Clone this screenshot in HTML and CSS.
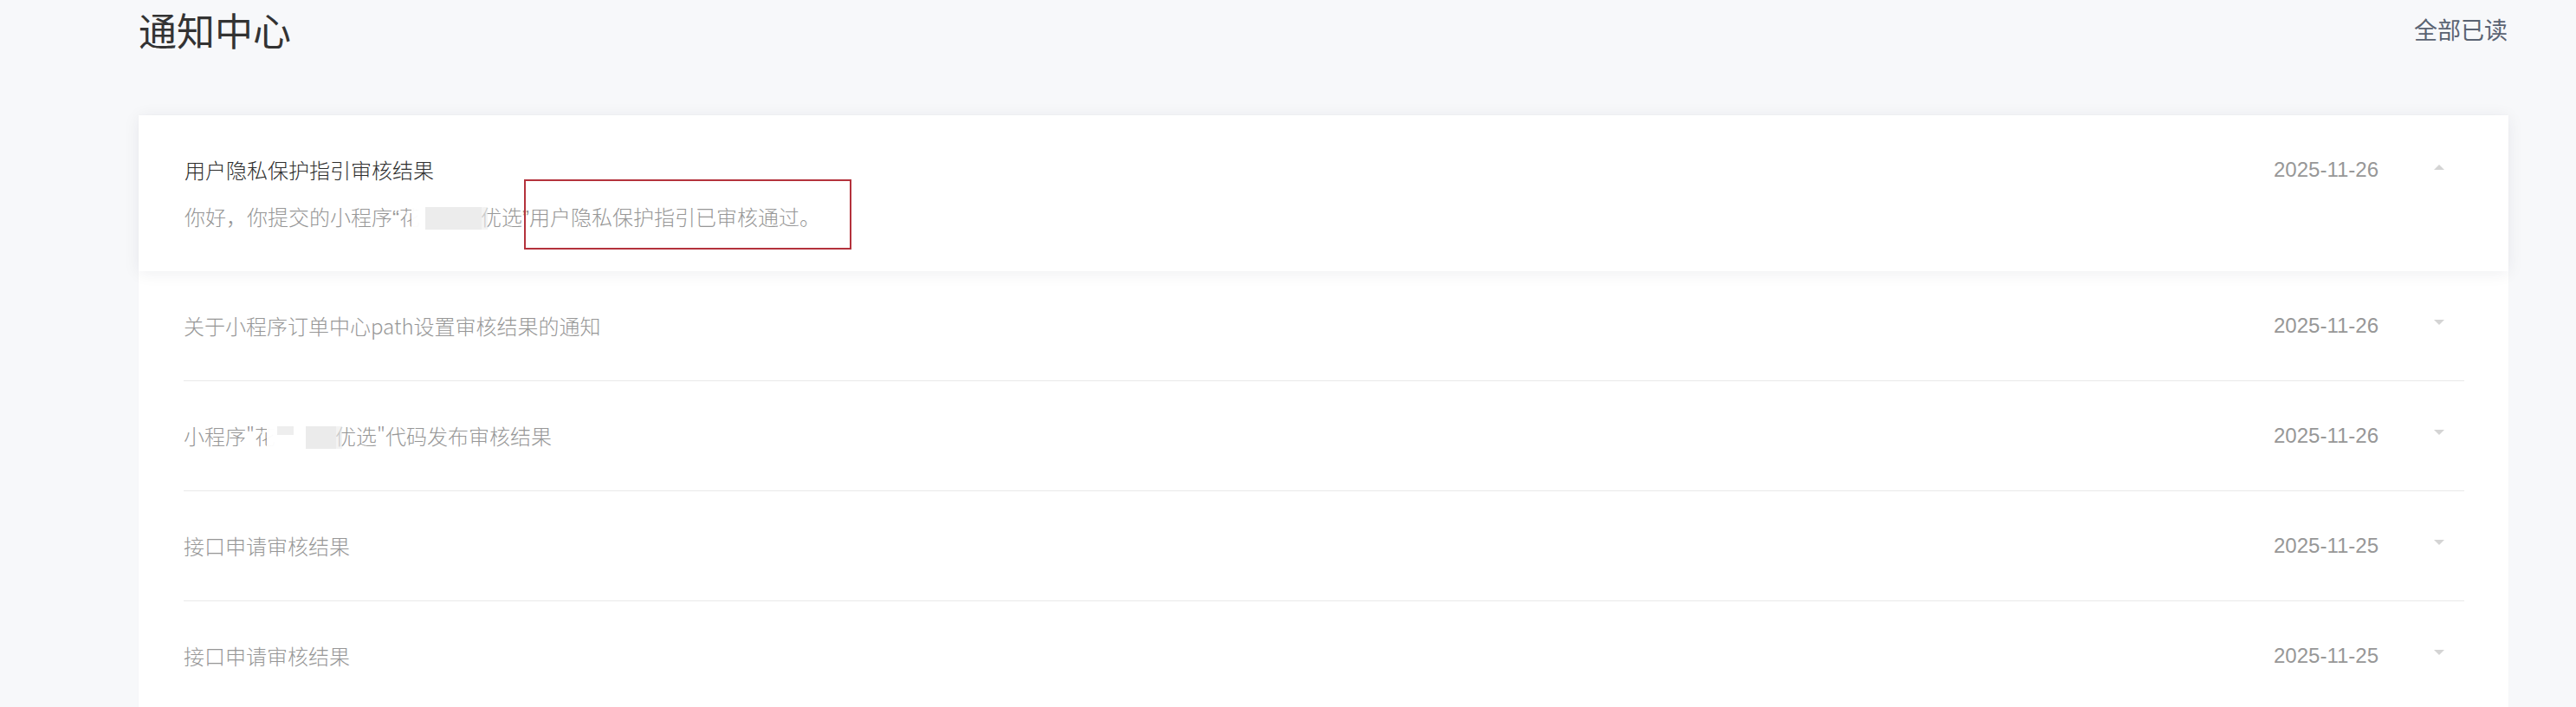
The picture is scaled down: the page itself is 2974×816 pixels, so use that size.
FILE: index.html
```html
<!DOCTYPE html>
<html lang="zh-CN">
<head>
<meta charset="utf-8">
<title>通知中心</title>
<link rel="stylesheet" href="styles.css">
</head>
<body>
<div class="page">
  <header class="header">
    <h1 class="page-title">通知中心</h1>
    <a class="read-all">全部已读</a>
  </header>

  <section class="card">
    <div class="item item-open">
      <div class="item-main">
        <div class="item-title">用户隐私保护指引审核结果</div>
        <div class="item-desc">你好，你提交的小程序<span class="q">“</span>花<span class="mask mask-a"></span>优选<span class="q">”</span>用户隐私保护指引已审核通过。</div>
      </div>
      <div class="item-date">2025-11-26</div>
      <svg class="caret" width="12" height="6" viewBox="0 0 12 6"><path d="M0 6 L6 0 L12 6 Z" fill="#d4d4d4"/></svg>
      <div class="annot"></div>
    </div>

    <div class="item">
      <div class="item-main">
        <div class="item-title muted">关于小程序订单中心path设置审核结果的通知</div>
      </div>
      <div class="item-date">2025-11-26</div>
      <svg class="caret" width="12" height="6" viewBox="0 0 12 6"><path d="M0 0 L12 0 L6 6 Z" fill="#d4d4d4"/></svg>
    </div>

    <div class="item">
      <div class="item-main">
        <div class="item-title muted">小程序"花<span class="mask mask-b"></span>优选"代码发布审核结果</div>
      </div>
      <div class="item-date">2025-11-26</div>
      <svg class="caret" width="12" height="6" viewBox="0 0 12 6"><path d="M0 0 L12 0 L6 6 Z" fill="#d4d4d4"/></svg>
    </div>

    <div class="item">
      <div class="item-main">
        <div class="item-title muted">接口申请审核结果</div>
      </div>
      <div class="item-date">2025-11-25</div>
      <svg class="caret" width="12" height="6" viewBox="0 0 12 6"><path d="M0 0 L12 0 L6 6 Z" fill="#d4d4d4"/></svg>
    </div>

    <div class="item">
      <div class="item-main">
        <div class="item-title muted">接口申请审核结果</div>
      </div>
      <div class="item-date">2025-11-25</div>
      <svg class="caret" width="12" height="6" viewBox="0 0 12 6"><path d="M0 0 L12 0 L6 6 Z" fill="#d4d4d4"/></svg>
    </div>
  </section>
</div>
</body>
</html>
```

FILE: styles.css
```css
* { box-sizing: border-box; }

html, body {
  margin: 0;
  padding: 0;
  background: #f7f8fa;
  font-family: "Noto Sans CJK SC", "Noto Sans", sans-serif;
  overflow: hidden;
}

.page {
  width: 2974px;
  padding: 0 78px 0 160px;
}

.header {
  height: 68px;
  display: flex;
  align-items: center;
  justify-content: space-between;
}

.page-title {
  margin: 0;
  font-size: 44px;
  font-weight: 400;
  line-height: 68px;
  color: #333333;
}

.read-all {
  font-size: 27px;
  line-height: 68px;
  color: #5a6372;
  padding-right: 1px;
}

.card {
  margin-top: 65px;
  background: #ffffff;
  box-shadow: 0 0 2px rgba(0, 0, 0, 0.03);
}

.item {
  position: relative;
  display: flex;
  align-items: center;
  margin: 0 51px 0 52px;
  height: 127px;
  border-bottom: 1px solid #e9e9e9;
}

.item-open {
  margin: 0;
  height: 180px;
  padding: 48px 51px 0 53px;
  border-bottom: none;
  align-items: flex-start;
  box-shadow: 0 2px 18px rgba(20, 30, 60, 0.07);
  background: #ffffff;
}

.item-main {
  flex: 1;
  min-width: 0;
}

.item-title {
  font-size: 24px;
  line-height: 30px;
  font-weight: 300;
  color: #2e2e2e;
  white-space: nowrap;
}

.item-title.muted {
  color: #979797;
}

.item-desc {
  margin-top: 24px;
  font-size: 24px;
  line-height: 30px;
  font-weight: 300;
  color: #979797;
  white-space: nowrap;
}

.q {
  font-family: "Liberation Sans", Arial, sans-serif;
}

.mask {
  display: inline-block;
  vertical-align: middle;
  height: 26px;
  margin: -2px -8px 0 -10px;
  position: relative;
  z-index: 1;
}

.mask-a {
  width: 88px;
  background: linear-gradient(to right, rgba(255,255,255,0.96) 0 18%, #ececec 18% 92%, rgba(236,236,236,0.6) 92% 100%);
}

.mask-b {
  width: 87px;
  background:
    linear-gradient(to bottom, #eeeeee 0 40%, transparent 40% 100%) 18% 0 / 22% 100% no-repeat,
    linear-gradient(to right, rgba(255,255,255,0.97) 0 52%, #ebebeb 52% 92%, rgba(235,235,235,0.6) 92% 100%);
}

.item-date {
  font-family: "Liberation Sans", Arial, sans-serif;
  font-size: 24px;
  line-height: 30px;
  color: #979797;
  width: 126px;
  margin-right: 59px;
}

.caret {
  display: block;
  margin-right: 23px;
  margin-top: -8px;
}

.item-open .caret {
  margin-top: 9px;
}

.annot {
  position: absolute;
  left: 445px;
  top: 74px;
  width: 378px;
  height: 81px;
  border: 2px solid #b4323c;
}
```
